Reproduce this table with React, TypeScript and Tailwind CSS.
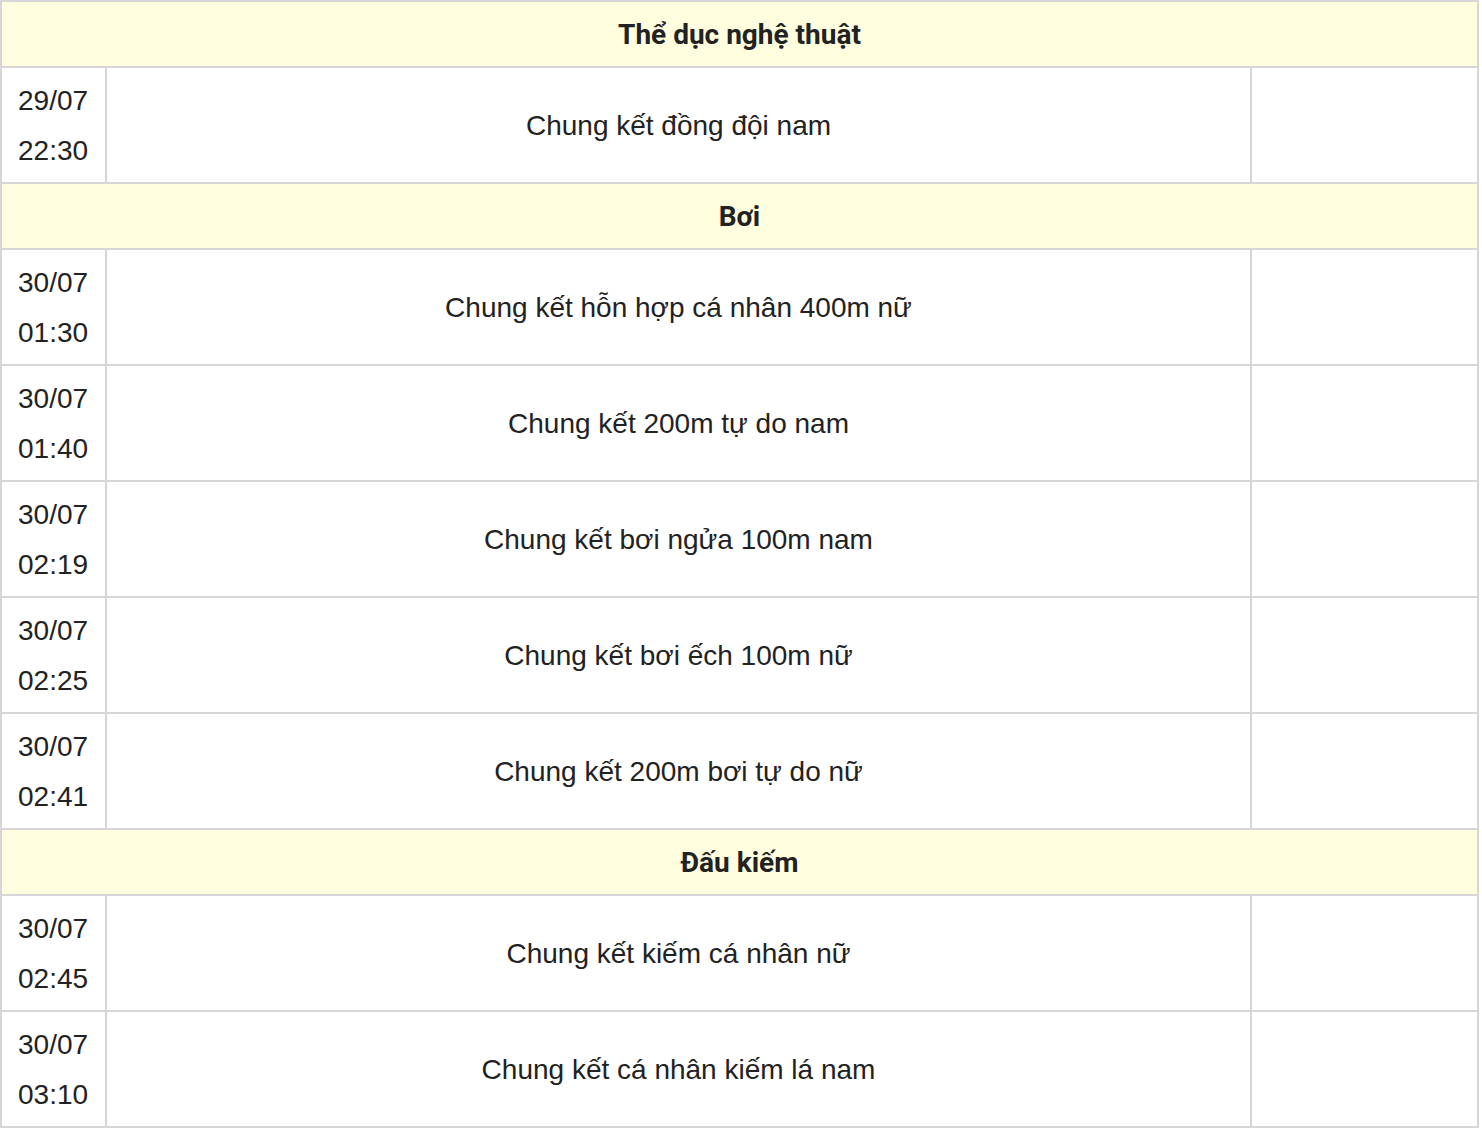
const sections = [
  {
    title: "Thể dục nghệ thuật",
    events: [{ date: "29/07", time: "22:30", name: "Chung kết đồng đội nam" }],
  },
  {
    title: "Bơi",
    events: [
      { date: "30/07", time: "01:30", name: "Chung kết hỗn hợp cá nhân 400m nữ" },
      { date: "30/07", time: "01:40", name: "Chung kết 200m tự do nam" },
      { date: "30/07", time: "02:19", name: "Chung kết bơi ngửa 100m nam" },
      { date: "30/07", time: "02:25", name: "Chung kết bơi ếch 100m nữ" },
      { date: "30/07", time: "02:41", name: "Chung kết 200m bơi tự do nữ" },
    ],
  },
  {
    title: "Đấu kiếm",
    events: [
      { date: "30/07", time: "02:45", name: "Chung kết kiếm cá nhân nữ" },
      { date: "30/07", time: "03:10", name: "Chung kết cá nhân kiếm lá nam" },
    ],
  },
];

export default function App() {
  return (
    <div className="min-h-screen bg-white">
      <div className="w-[1479px] border-2 border-b-0 border-[#d6d6d6] font-['Liberation_Sans',Arial,sans-serif] text-[28px] text-[#222]">
        {sections.map((s) => (
          <div key={s.title}>
            <div className="flex h-[66px] items-center justify-center border-b-2 border-[#d6d6d6] bg-[#ffffe0] pt-[2px] font-['Roboto',sans-serif] font-bold">
              {s.title}
            </div>
            {s.events.map((e) => (
              <div key={e.time} className="flex h-[116px] border-b-2 border-[#d6d6d6]">
                <div className="flex w-[105px] flex-col justify-center border-r-2 border-[#d6d6d6] pl-[16px] pt-[2px] leading-[50px]">
                  <span>{e.date}</span>
                  <span>{e.time}</span>
                </div>
                <div className="flex flex-1 items-center justify-center border-r-2 border-[#d6d6d6] pt-[2px]">
                  {e.name}
                </div>
                <div className="w-[225px]" />
              </div>
            ))}
          </div>
        ))}
      </div>
    </div>
  );
}
